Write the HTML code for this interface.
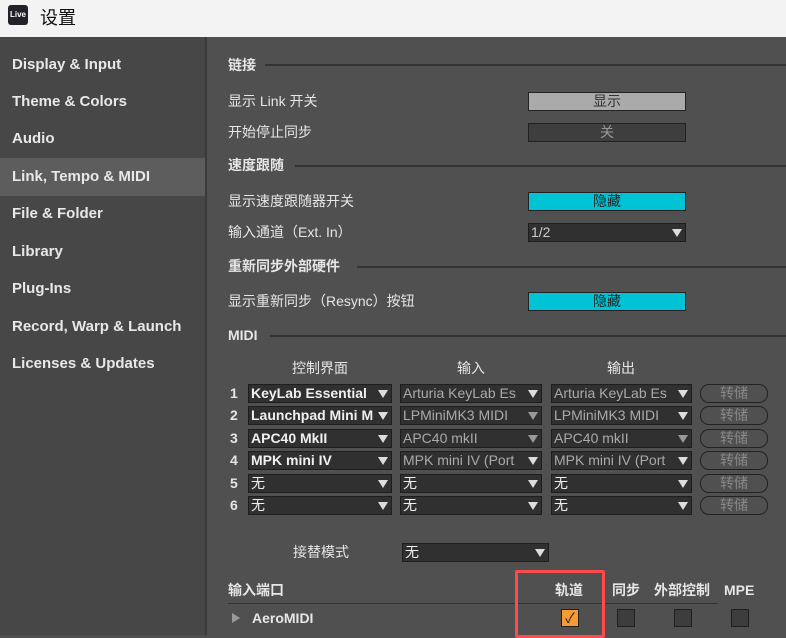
<!DOCTYPE html>
<html><head><meta charset="utf-8"><style>
*{margin:0;padding:0;box-sizing:border-box}
body{width:786px;height:635px;overflow:hidden;background:#505050;font-family:"Liberation Sans","Noto Sans CJK SC",sans-serif;position:relative;color:#e6e6e6}
.a{position:absolute;white-space:nowrap}
#title{left:0;top:0;width:786px;height:37px;background:#f3f3f3}
#side{left:0;top:37px;width:205px;height:598px;background:#474747}
#sep{left:205px;top:37px;width:2px;height:598px;background:#3a3a3a}
.si{left:12px;font-size:15px;font-weight:bold;color:#e8e8e8;line-height:18px}
.h{font-size:14px;font-weight:bold;left:228px;line-height:18px}
.hl{height:2px;background:#333;right:0}
.t{font-size:14px;left:228px;line-height:18px}
.btn{border:1px solid #222;height:19px;font-size:14px;text-align:center;line-height:17px}
.dd{border:1px solid #1e1e1e;background:#303030;height:19px;font-size:14px;line-height:17px;padding-left:2px;overflow:hidden;color:#aaa}
.dd b{position:absolute;right:3px;top:5px;width:0;height:0;border-left:5px solid transparent;border-right:5px solid transparent;border-top:8px solid #ddd}
.w{color:#f0f0f0;font-weight:bold}
.n{font-size:14px;font-weight:bold;left:230px}
.sb{border:1px solid #222;border-radius:9px;height:19px;width:68px;left:700px;font-size:14px;text-align:center;line-height:17px;color:#888}
.cb{width:18px;height:18px;background:#3d3d3d;border:1px solid #1f1f1f;top:609px}
</style></head><body>
<div class="a" id="title"></div>
<div class="a" style="left:8px;top:5px;width:20px;height:20px;background:#222228;border-radius:3px;color:#fff;font-size:8px;line-height:20px;text-align:center;font-weight:bold">Live</div>
<div class="a" style="left:40px;top:4px;font-size:18px;color:#111">设置</div>
<div class="a" id="side"></div>
<div class="a" style="left:0;top:158px;width:205px;height:38px;background:#5d5d5d"></div>
<div class="a" id="sep"></div>
<div class="a si" style="top:56px">Display &amp; Input</div>
<div class="a si" style="top:93px">Theme &amp; Colors</div>
<div class="a si" style="top:130px">Audio</div>
<div class="a si" style="top:168px">Link, Tempo &amp; MIDI</div>
<div class="a si" style="top:205px">File &amp; Folder</div>
<div class="a si" style="top:243px">Library</div>
<div class="a si" style="top:280px">Plug-Ins</div>
<div class="a si" style="top:318px">Record, Warp &amp; Launch</div>
<div class="a si" style="top:355px">Licenses &amp; Updates</div>

<div class="a h" style="top:56px">链接</div><div class="a hl" style="left:265px;top:64px"></div>
<div class="a t" style="top:92px">显示 Link 开关</div>
<div class="a btn" style="left:528px;top:92px;width:158px;background:#aaa;color:#333">显示</div>
<div class="a t" style="top:123px">开始停止同步</div>
<div class="a btn" style="left:528px;top:123px;width:158px;background:#3e3e3e;color:#999">关</div>
<div class="a h" style="top:156px">速度跟随</div><div class="a hl" style="left:295px;top:165px"></div>
<div class="a t" style="top:192px">显示速度跟随器开关</div>
<div class="a btn" style="left:528px;top:192px;width:158px;background:#00c3d6;color:#222">隐藏</div>
<div class="a t" style="top:223px">输入通道（Ext. In）</div>
<div class="a dd" style="left:528px;top:223px;width:158px;color:#ccc">1/2<b></b></div>
<div class="a h" style="top:257px">重新同步外部硬件</div><div class="a hl" style="left:357px;top:266px"></div>
<div class="a t" style="top:292px">显示重新同步（Resync）按钮</div>
<div class="a btn" style="left:528px;top:292px;width:158px;background:#00c3d6;color:#222">隐藏</div>
<div class="a h" style="top:326px">MIDI</div><div class="a hl" style="left:270px;top:335px"></div>
<div class="a t" style="left:292px;top:359px">控制界面</div>
<div class="a t" style="left:457px;top:359px">输入</div>
<div class="a t" style="left:607px;top:359px">输出</div>

<div class="a n" style="top:385px">1</div>
<div class="a dd w" style="left:248px;top:384px;width:144px">KeyLab Essential<b></b></div>
<div class="a dd" style="left:400px;top:384px;width:142px">Arturia KeyLab Es<b></b></div>
<div class="a dd" style="left:551px;top:384px;width:141px">Arturia KeyLab Es<b></b></div>
<div class="a sb" style="top:384px">转储</div>
<div class="a n" style="top:407px">2</div>
<div class="a dd w" style="left:248px;top:406px;width:144px">Launchpad Mini M<b></b></div>
<div class="a dd" style="left:400px;top:406px;width:142px">LPMiniMK3 MIDI<b style="border-top-color:#999"></b></div>
<div class="a dd" style="left:551px;top:406px;width:141px">LPMiniMK3 MIDI<b></b></div>
<div class="a sb" style="top:406px">转储</div>
<div class="a n" style="top:430px">3</div>
<div class="a dd w" style="left:248px;top:429px;width:144px">APC40 MkII<b></b></div>
<div class="a dd" style="left:400px;top:429px;width:142px">APC40 mkII<b style="border-top-color:#999"></b></div>
<div class="a dd" style="left:551px;top:429px;width:141px">APC40 mkII<b style="border-top-color:#999"></b></div>
<div class="a sb" style="top:429px">转储</div>
<div class="a n" style="top:452px">4</div>
<div class="a dd w" style="left:248px;top:451px;width:144px">MPK mini IV<b></b></div>
<div class="a dd" style="left:400px;top:451px;width:142px">MPK mini IV (Port<b></b></div>
<div class="a dd" style="left:551px;top:451px;width:141px">MPK mini IV (Port<b></b></div>
<div class="a sb" style="top:451px">转储</div>
<div class="a n" style="top:475px">5</div>
<div class="a dd" style="left:248px;top:474px;width:144px;color:#eee">无<b></b></div>
<div class="a dd" style="left:400px;top:474px;width:142px;color:#eee">无<b></b></div>
<div class="a dd" style="left:551px;top:474px;width:141px;color:#eee">无<b></b></div>
<div class="a sb" style="top:474px">转储</div>
<div class="a n" style="top:497px">6</div>
<div class="a dd" style="left:248px;top:496px;width:144px;color:#eee">无<b></b></div>
<div class="a dd" style="left:400px;top:496px;width:142px;color:#eee">无<b></b></div>
<div class="a dd" style="left:551px;top:496px;width:141px;color:#eee">无<b></b></div>
<div class="a sb" style="top:496px">转储</div>

<div class="a t" style="left:293px;top:543px">接替模式</div>
<div class="a dd" style="left:402px;top:543px;width:147px;color:#eee">无<b></b></div>

<div class="a h" style="top:581px">输入端口</div>
<div class="a h" style="left:555px;top:581px">轨道</div>
<div class="a h" style="left:612px;top:581px">同步</div>
<div class="a h" style="left:654px;top:581px">外部控制</div>
<div class="a h" style="left:724px;top:581px">MPE</div>
<div class="a" style="left:228px;top:603px;width:490px;height:1px;background:#333"></div>
<div class="a" style="left:232px;top:613px;width:0;height:0;border-top:5px solid transparent;border-bottom:5px solid transparent;border-left:8px solid #999"></div>
<div class="a t" style="left:252px;top:609px;font-weight:bold">AeroMIDI</div>
<div class="a cb" style="left:561px;background:#f79b32;color:#222;font-size:14px;line-height:16px;text-align:center">✓</div>
<div class="a cb" style="left:617px"></div>
<div class="a cb" style="left:674px"></div>
<div class="a cb" style="left:731px"></div>
<div class="a" style="left:515px;top:570px;width:90px;height:68px;border:3px solid #ff4b4b;border-radius:2px"></div>
</body></html>
